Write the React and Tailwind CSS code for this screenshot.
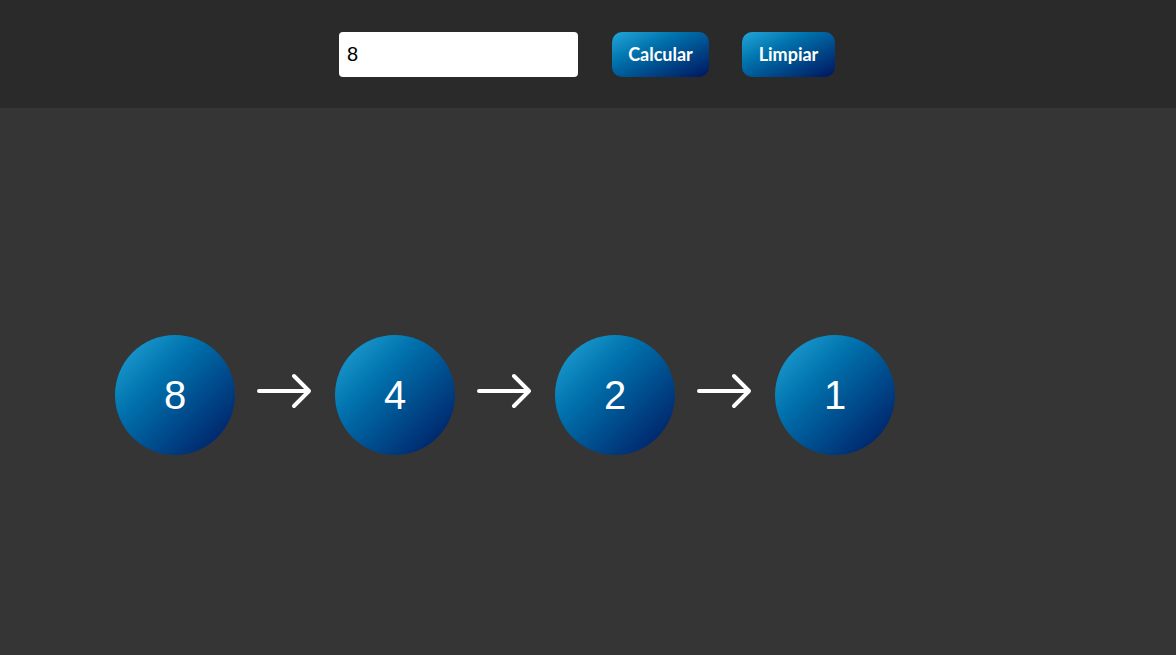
import React from "react";

function Arrow() {
  return (
    <svg width="56" height="36" viewBox="0 0 56 36" className="block">
      <path d="M2 18 H52 M37 3 L52 18 L37 33" fill="none" stroke="white" strokeWidth="4" strokeLinecap="round" strokeLinejoin="round" />
    </svg>
  );
}

function Circle({ n }) {
  return (
    <div className="w-[120px] h-[120px] rounded-full bg-gradient-to-br from-[#22a8da] to-[#00135e] flex items-center justify-center text-white text-[40px] leading-none font-['Liberation_Sans',Arial,sans-serif]">
      {n}
    </div>
  );
}

export default function App() {
  const seq = [8, 4, 2, 1];
  return (
    <div className="w-[1176px] h-[655px] bg-[#353535] flex flex-col font-['Lato',sans-serif]">
      <div className="h-[108px] bg-[#2a2a2a] flex items-center justify-center shrink-0 pr-[2px]">
        <input
          defaultValue="8"
          className="w-[239px] h-[45px] bg-white rounded-[4px] px-[8px] text-[20px] text-black outline-none font-['Liberation_Sans',Arial,sans-serif]"
        />
        <button className="ml-[34px] h-[45px] w-[97px] rounded-[10px] bg-gradient-to-br from-[#22a8da] to-[#00135e] text-white font-bold text-[18px]">
          Calcular
        </button>
        <button className="ml-[33px] h-[45px] w-[93px] rounded-[10px] bg-gradient-to-br from-[#22a8da] to-[#00135e] text-white font-bold text-[18px]">
          Limpiar
        </button>
      </div>
      <div className="flex items-center pl-[115px] pt-[227px]">
        {seq.map((n, i) => (
          <React.Fragment key={i}>
            {i > 0 && (
              <div className="w-[100px] flex justify-center -mt-[8px]">
                <Arrow />
              </div>
            )}
            <Circle n={n} />
          </React.Fragment>
        ))}
      </div>
    </div>
  );
}
